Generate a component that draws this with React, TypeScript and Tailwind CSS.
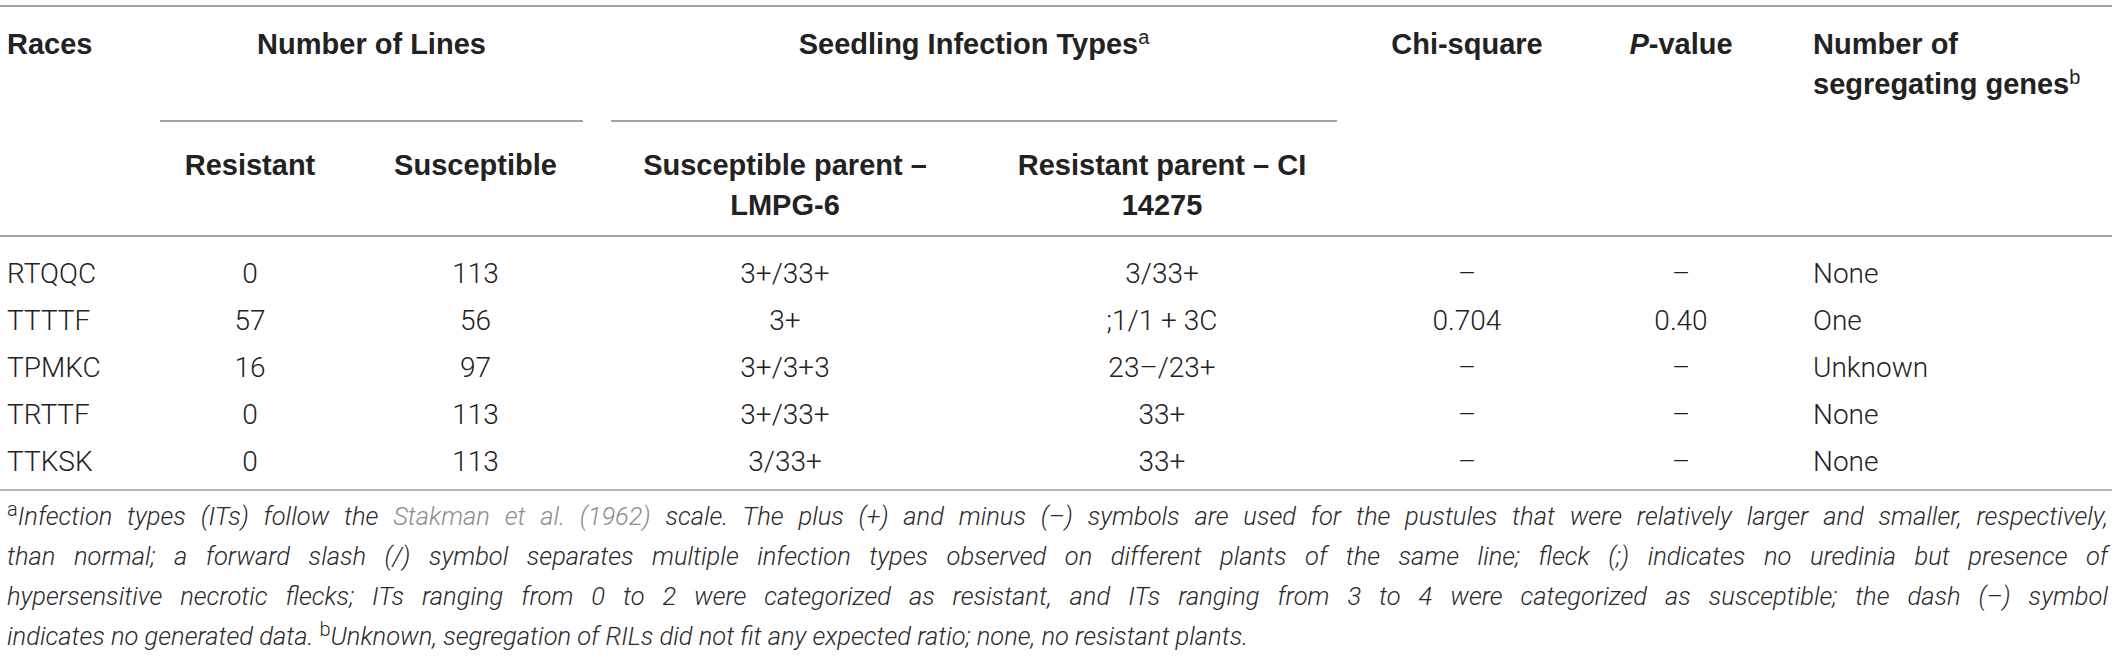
import React from "react";

const rows = [
  ["RTQQC", "0", "113", "3+/33+", "3/33+", "–", "–", "None"],
  ["TTTTF", "57", "56", "3+", ";1/1 + 3C", "0.704", "0.40", "One"],
  ["TPMKC", "16", "97", "3+/3+3", "23–/23+", "–", "–", "Unknown"],
  ["TRTTF", "0", "113", "3+/33+", "33+", "–", "–", "None"],
  ["TTKSK", "0", "113", "3/33+", "33+", "–", "–", "None"],
];

const cols = "grid grid-cols-[146px_208px_243px_376px_378px_232px_196px_333px]";
const head = "font-['Liberation_Sans',Arial,sans-serif] font-bold text-[29px] leading-[40px] text-[#222]";
const body = "font-['Roboto','Liberation_Sans',sans-serif] font-light text-[28px] text-[#222]";

const Line = ({ text, last }: { text: React.ReactNode; last?: boolean }) => (
  <div
    className={
      last
        ? "h-[40px] leading-[40px] whitespace-nowrap"
        : "h-[40px] leading-[40px] whitespace-nowrap text-justify [text-align-last:justify]"
    }
  >
    {text}
  </div>
);

const Sup = ({ c }: { c: string }) => (
  <span className="not-italic text-[20px] relative top-[-9px]">{c}</span>
);

export default function App() {
  return (
    <div className="w-[2121px] h-[659px] bg-white pt-[5px]">
      <div className="w-[2112px]">
        <div className="h-[2px] bg-[#a3a3a3]" />

        {/* header */}
        <div className={`${cols} grid-rows-[115px_113px] ${head}`}>
          <div className="row-span-2 pl-[7px] pt-[17px]">Races</div>
          <div className="col-span-2 flex flex-col justify-between pt-[17px]">
            <div className="text-center">Number of Lines</div>
            <div className="mx-[14px] h-[2px] bg-[#a3a3a3]" />
          </div>
          <div className="col-span-2 flex flex-col justify-between pt-[17px]">
            <div className="text-center">
              Seedling Infection Types
              <span className="text-[20px] font-normal relative top-[-10px]">a</span>
            </div>
            <div className="mx-[14px] h-[2px] bg-[#a3a3a3]" />
          </div>
          <div className="row-span-2 pt-[17px] text-center">Chi-square</div>
          <div className="row-span-2 pt-[17px] text-center">
            <i>P</i>-value
          </div>
          <div className="row-span-2 pt-[17px] pl-[34px]">
            Number of
            <br />
            segregating genes
            <span className="text-[20px] font-normal relative top-[-10px]">b</span>
          </div>
          <div className="pt-[23px] text-center">Resistant</div>
          <div className="pt-[23px] text-center">Susceptible</div>
          <div className="pt-[23px] text-center">
            Susceptible parent –
            <br />
            LMPG-6
          </div>
          <div className="pt-[23px] text-center">
            Resistant parent – CI
            <br />
            14275
          </div>
        </div>

        <div className="h-[2px] bg-[#a3a3a3]" />

        {/* body */}
        <div className={`pt-[13px] pb-[4px] ${body}`}>
          {rows.map((r) => (
            <div key={r[0]} className={`${cols} h-[47px] items-center`}>
              <div className="pl-[7px]">{r[0]}</div>
              {r.slice(1, 7).map((c, i) => (
                <div key={i} className="text-center">
                  {c}
                </div>
              ))}
              <div className="pl-[34px]">{r[7]}</div>
            </div>
          ))}
        </div>

        <div className="h-[2px] bg-[#b5b5b5]" />

        {/* footnote */}
        <div className="pl-[7px] pr-[4px] pt-[5px] font-['Roboto','Liberation_Sans',sans-serif] font-light italic text-[25.5px] text-[#2a2a2a]">
          <Line
            text={
              <>
                <Sup c="a" />
                Infection types (ITs) follow the <span className="text-[#8c8c8c]">Stakman et al. (1962)</span> scale.
                The plus (+) and minus (–) symbols are used for the pustules that were relatively larger and smaller,
                respectively,
              </>
            }
          />
          <Line text="than normal; a forward slash (/) symbol separates multiple infection types observed on different plants of the same line; fleck (;) indicates no uredinia but presence of" />
          <Line text="hypersensitive necrotic flecks; ITs ranging from 0 to 2 were categorized as resistant, and ITs ranging from 3 to 4 were categorized as susceptible; the dash (–) symbol" />
          <Line
            last
            text={
              <>
                indicates no generated data. <Sup c="b" />
                Unknown, segregation of RILs did not fit any expected ratio; none, no resistant plants.
              </>
            }
          />
        </div>
      </div>
    </div>
  );
}
